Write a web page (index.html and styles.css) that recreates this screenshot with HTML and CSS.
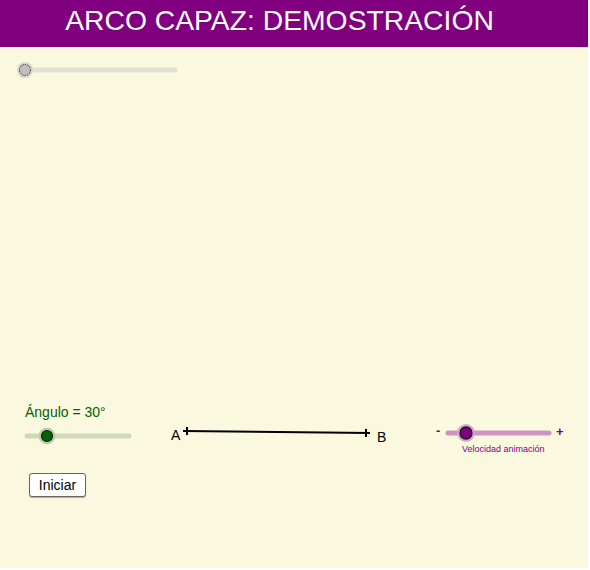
FILE: index.html
```html
<!DOCTYPE html>
<html lang="es">
<head>
<meta charset="utf-8">
<title>Arco capaz</title>
<link rel="stylesheet" href="styles.css">
</head>
<body>
<div class="applet">
  <header class="title">ARCO CAPAZ: DEMOSTRACIÓN</header>
  <div class="canvas">
    <svg class="drawing" width="588" height="521" viewBox="0 47 588 521">
      <!-- top slider -->
      <line x1="25" y1="70" x2="175" y2="70" stroke="#e3e2d2" stroke-width="5" stroke-linecap="round"/>
      <circle cx="25" cy="70" r="8" fill="#d9d8c8"/>
      <circle cx="25" cy="70" r="5.5" fill="#c0c0c0" stroke="#333" stroke-width="1" stroke-dasharray="1.5 1"/>
      <!-- angle slider -->
      <line x1="27" y1="436" x2="129" y2="436" stroke="#cfd9b6" stroke-width="5" stroke-linecap="round"/>
      <circle cx="47" cy="436" r="8.5" fill="#c0cfa6"/>
      <circle cx="47" cy="436" r="5.5" fill="#006400" stroke="#1a1a1a" stroke-width="1.2"/>
      <!-- segment AB -->
      <line x1="183" y1="431" x2="370" y2="433" stroke="#000" stroke-width="2"/>
      <line x1="187" y1="427" x2="187" y2="435" stroke="#000" stroke-width="2"/>
      <line x1="366" y1="429" x2="366" y2="437" stroke="#000" stroke-width="2"/>
      <!-- speed slider -->
      <line x1="448" y1="433" x2="549" y2="433" stroke="#cf93c2" stroke-width="5" stroke-linecap="round"/>
      <circle cx="466" cy="433" r="9" fill="#d7a6cc"/>
      <circle cx="466" cy="433" r="6" fill="#800080" stroke="#1a1a1a" stroke-width="1.3"/>
    </svg>
    <span class="label angle">Ángulo = 30°</span>
    <span class="label pt pt-a">A</span>
    <span class="label pt pt-b">B</span>
    <span class="label sign minus">-</span>
    <span class="label sign plus">+</span>
    <span class="label speed">Velocidad animación</span>
    <button class="btn" type="button">Iniciar</button>
  </div>
</div>
</body>
</html>
```
FILE: styles.css
```css
html, body {
  margin: 0;
  padding: 0;
  background: #ffffff;
}
body {
  font-family: "Liberation Sans", Arial, sans-serif;
}
.applet {
  width: 588px;
  height: 568px;
  display: flex;
  flex-direction: column;
  background: #fbf8e0;
}
.title {
  height: 47px;
  flex: none;
  background: #800080;
  color: #ffffff;
  font-size: 28.3px;
  line-height: 40px;
  text-align: center;
  padding-right: 29px;
  box-sizing: border-box;
  white-space: nowrap;
}
.canvas {
  position: relative;
  flex: 1;
}
.drawing {
  position: absolute;
  left: 0;
  top: 0;
}
.label {
  position: absolute;
  white-space: nowrap;
  line-height: 1;
}
.angle {
  left: 25px;
  top: 358px;
  font-size: 14px;
  color: #006400;
}
.pt {
  font-size: 14px;
  color: #000;
}
.pt-a { left: 171px; top: 381px; }
.pt-b { left: 377px; top: 383px; }
.sign {
  font-size: 13px;
  color: #800080;
  font-weight: bold;
}
.minus { left: 436px; top: 377px; }
.plus { left: 556px; top: 378px; }
.speed {
  left: 462px;
  top: 398px;
  font-size: 9px;
  color: #800080;
}
.btn {
  position: absolute;
  left: 29px;
  top: 426px;
  width: 57px;
  height: 24px;
  padding: 0;
  background: #ffffff;
  border: 1px solid #666;
  border-radius: 3px;
  box-shadow: 0 1px 1px rgba(0,0,0,0.3);
  font-family: "Liberation Sans", Arial, sans-serif;
  font-size: 14px;
  color: #000;
}
```
